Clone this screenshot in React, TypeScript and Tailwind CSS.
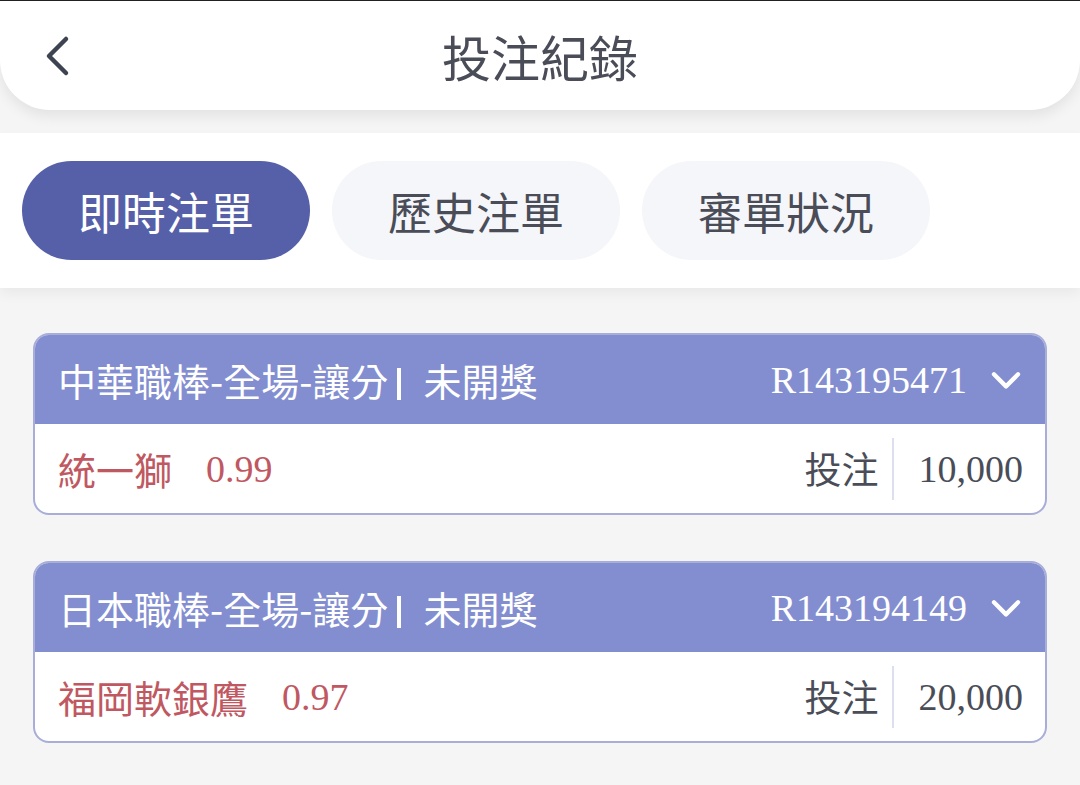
import { ReactNode } from "react";

const cjk = "font-['Noto_Sans_CJK_TC','Noto_Sans',sans-serif]";
const serif = "font-['Liberation_Serif','Noto_Sans_CJK_TC',serif]";

type Bet = {
  league: string;
  status: string;
  code: string;
  team: string;
  odds: string;
  amount: string;
};

const bets: Bet[] = [
  { league: "中華職棒-全場-讓分", status: "未開獎", code: "R143195471", team: "統一獅", odds: "0.99", amount: "10,000" },
  { league: "日本職棒-全場-讓分", status: "未開獎", code: "R143194149", team: "福岡軟銀鷹", odds: "0.97", amount: "20,000" },
];

function Tab({ active, children }: { active?: boolean; children: ReactNode }) {
  return (
    <div
      className={`flex h-[99px] w-[288px] items-center justify-center rounded-full text-[44px] ${
        active ? "bg-[#5560a8] text-white" : "bg-[#f5f6fa] text-[#4a4d57]"
      }`}
    >
      {children}
    </div>
  );
}

function BetCard({ bet }: { bet: Bet }) {
  return (
    <div className="overflow-hidden rounded-[16px] border-2 border-[#a8aed8] bg-white">
      <div className="flex h-[89px] items-center justify-between pr-[22px] pl-[23px] bg-[#838ed1] text-white">
        <div className="flex items-center text-[38px] leading-none">
          <span>{bet.league}</span>
          <span className="mt-[8px] mr-[22px] ml-[9px] inline-block h-[32px] w-[4px] bg-white" />
          <span>{bet.status}</span>
        </div>
        <div className="flex items-center">
          <span className={`${serif} text-[38px] leading-none`}>{bet.code}</span>
          <svg className="ml-[22px] h-[34px] w-[34px]" viewBox="0 0 24 24" fill="none" stroke="white" strokeWidth="3" strokeLinecap="round" strokeLinejoin="round">
            <path d="M3.5 8l8.5 8.5L20.5 8" />
          </svg>
        </div>
      </div>
      <div className="flex h-[89px] items-center justify-between pr-[22px] pl-[23px]">
        <div className="flex items-center text-[#c05862]">
          <span className="text-[38px] leading-none">{bet.team}</span>
          <span className={`${serif} ml-[34px] text-[38px] leading-none`}>{bet.odds}</span>
        </div>
        <div className="flex items-center text-[#4a4d57]">
          <span className="text-[37px] leading-none">投注</span>
          <span className="mr-[25px] ml-[13px] h-[62px] w-[2px] bg-[#dcdff0]" />
          <span className={`${serif} text-[38px] leading-none`}>{bet.amount}</span>
        </div>
      </div>
    </div>
  );
}

export default function App() {
  return (
    <div className={`${cjk} h-[785px] w-[1080px] overflow-hidden bg-[#f5f5f5]`}>
      <div className="h-px bg-[#222]" />
      <header className="relative z-10 flex h-[109px] items-center justify-center rounded-b-[50px] bg-white shadow-[0_6px_14px_rgba(0,0,0,0.08)]">
        <svg className="absolute top-[33px] left-[40px] h-[44px] w-[36px]" viewBox="0 0 36 44" fill="none" stroke="#3d4350" strokeWidth="4.5" strokeLinecap="round" strokeLinejoin="round">
          <path d="M26 5L9 22l17 17" />
        </svg>
        <h1 className="text-[49px] leading-none text-[#4a4d57]">投注紀錄</h1>
      </header>

      <nav className="mt-[23px] flex h-[155px] items-center gap-[22px] bg-white px-[22px] shadow-[0_6px_12px_rgba(0,0,0,0.05)]">
        <Tab active>即時注單</Tab>
        <Tab>歷史注單</Tab>
        <Tab>審單狀況</Tab>
      </nav>

      <section className="mt-[45px] flex flex-col gap-[46px] px-[33px]">
        {bets.map((bet) => (
          <BetCard key={bet.code} bet={bet} />
        ))}
      </section>
    </div>
  );
}
